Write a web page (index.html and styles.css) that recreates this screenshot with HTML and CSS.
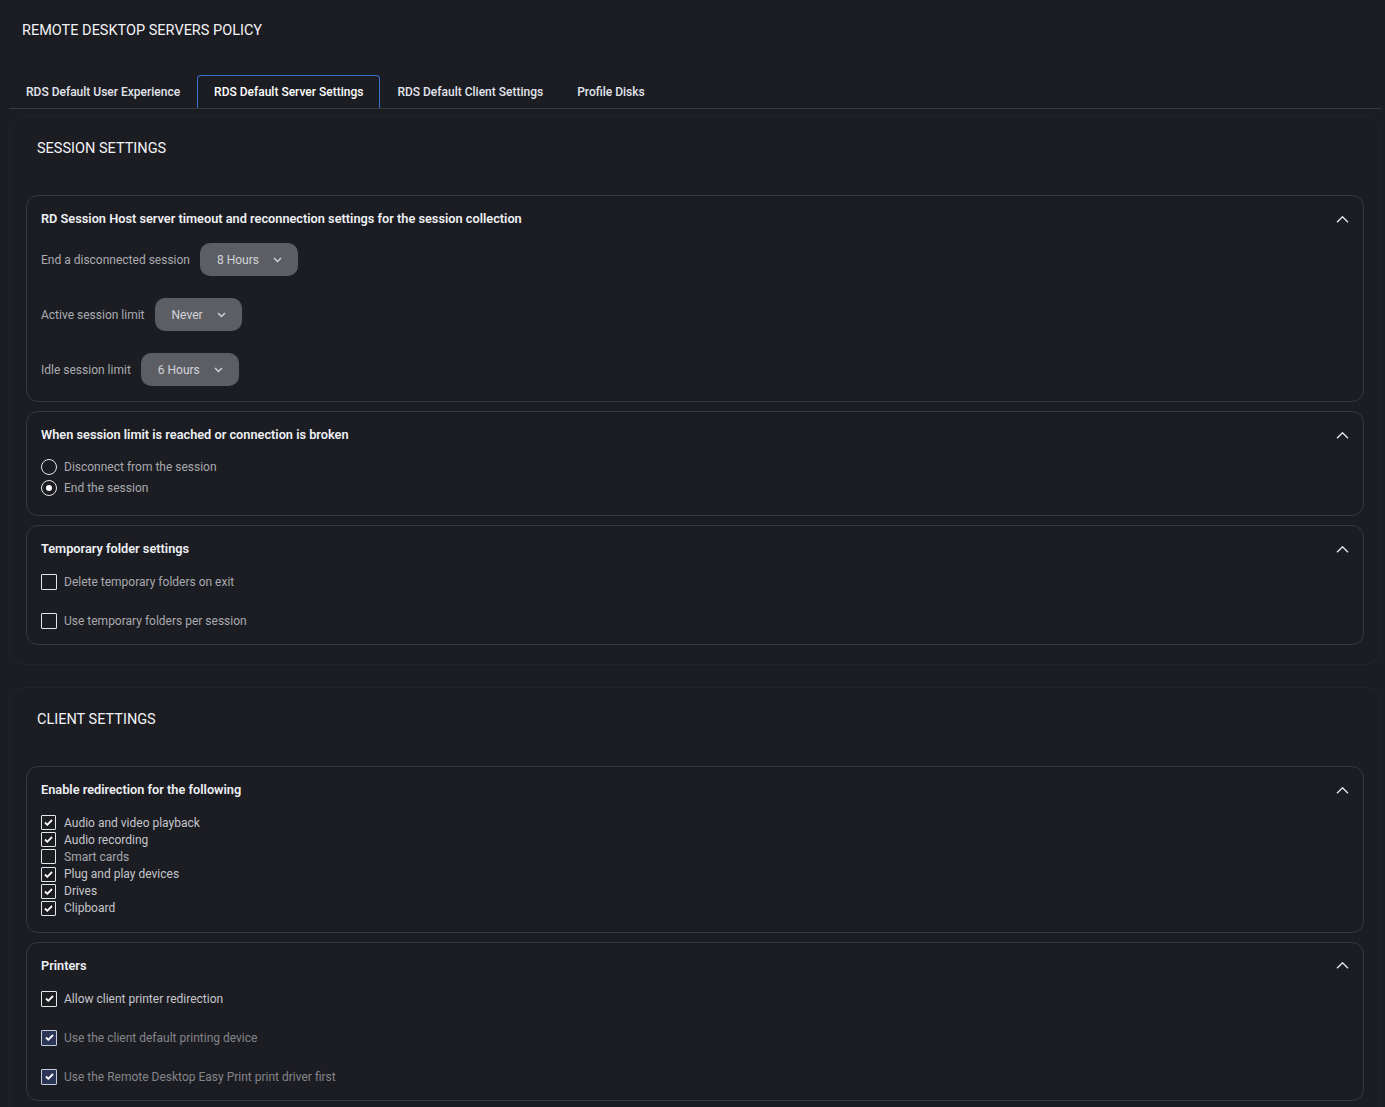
FILE: index.html
```html
<!DOCTYPE html>
<html>
<head>
  <meta charset="utf-8">
  <meta name="viewport" content="width=device-width, initial-scale=1">
  <title>Remote Desktop Servers Policy</title>
  <link rel="stylesheet" href="styles.css">
</head>
<body>
  <div class="page">
    <h1 class="page-title">REMOTE DESKTOP SERVERS POLICY</h1>

    <nav class="tabs">
      <a class="tab">RDS Default User Experience</a>
      <a class="tab active">RDS Default Server Settings</a>
      <a class="tab">RDS Default Client Settings</a>
      <a class="tab">Profile Disks</a>
    </nav>

    <!-- session settings -->
    <section class="panel">
      <h2 class="panel-title">SESSION SETTINGS</h2>

      <div class="card">
        <div class="card-head">
          <h3>RD Session Host server timeout and reconnection settings for the session collection</h3>
          <svg class="chev" width="13" height="7" viewBox="0 0 13 7"><path d="M1 6.3l5.5-5.5 5.5 5.5" fill="none" stroke="#e6e8ee" stroke-width="1.4"/></svg>
        </div>
        <div class="field-list">
          <div class="field">
            <span class="label">End a disconnected session</span>
            <div class="select">8 Hours <svg width="9" height="6" viewBox="0 0 9 6"><path d="M1 1l3.5 3.5L8 1" fill="none" stroke="#d0d2d8" stroke-width="1.5"/></svg></div>
          </div>
          <div class="field">
            <span class="label">Active session limit</span>
            <div class="select">Never <svg width="9" height="6" viewBox="0 0 9 6"><path d="M1 1l3.5 3.5L8 1" fill="none" stroke="#d0d2d8" stroke-width="1.5"/></svg></div>
          </div>
          <div class="field">
            <span class="label">Idle session limit</span>
            <div class="select">6 Hours <svg width="9" height="6" viewBox="0 0 9 6"><path d="M1 1l3.5 3.5L8 1" fill="none" stroke="#d0d2d8" stroke-width="1.5"/></svg></div>
          </div>
        </div>
      </div>

      <div class="card">
        <div class="card-head">
          <h3>When session limit is reached or connection is broken</h3>
          <svg class="chev" width="13" height="7" viewBox="0 0 13 7"><path d="M1 6.3l5.5-5.5 5.5 5.5" fill="none" stroke="#e6e8ee" stroke-width="1.4"/></svg>
        </div>
        <div class="radio-list">
          <label class="opt"><span class="radio"></span>Disconnect from the session</label>
          <label class="opt"><span class="radio on"></span>End the session</label>
        </div>
      </div>

      <div class="card">
        <div class="card-head">
          <h3>Temporary folder settings</h3>
          <svg class="chev" width="13" height="7" viewBox="0 0 13 7"><path d="M1 6.3l5.5-5.5 5.5 5.5" fill="none" stroke="#e6e8ee" stroke-width="1.4"/></svg>
        </div>
        <div class="check-list spaced">
          <label class="opt"><span class="box"></span>Delete temporary folders on exit</label>
          <label class="opt"><span class="box"></span>Use temporary folders per session</label>
        </div>
      </div>
    </section>

    <!-- client settings -->
    <section class="panel">
      <h2 class="panel-title">CLIENT SETTINGS</h2>

      <div class="card">
        <div class="card-head">
          <h3>Enable redirection for the following</h3>
          <svg class="chev" width="13" height="7" viewBox="0 0 13 7"><path d="M1 6.3l5.5-5.5 5.5 5.5" fill="none" stroke="#e6e8ee" stroke-width="1.4"/></svg>
        </div>
        <div class="check-list tight">
          <label class="opt lit"><span class="box on"><svg width="9" height="7" viewBox="0 0 9 7"><path d="M1 3.5l2.3 2.3L8 1" fill="none" stroke="#fff" stroke-width="1.8"/></svg></span>Audio and video playback</label>
          <label class="opt lit"><span class="box on"><svg width="9" height="7" viewBox="0 0 9 7"><path d="M1 3.5l2.3 2.3L8 1" fill="none" stroke="#fff" stroke-width="1.8"/></svg></span>Audio recording</label>
          <label class="opt"><span class="box"></span>Smart cards</label>
          <label class="opt lit"><span class="box on"><svg width="9" height="7" viewBox="0 0 9 7"><path d="M1 3.5l2.3 2.3L8 1" fill="none" stroke="#fff" stroke-width="1.8"/></svg></span>Plug and play devices</label>
          <label class="opt lit"><span class="box on"><svg width="9" height="7" viewBox="0 0 9 7"><path d="M1 3.5l2.3 2.3L8 1" fill="none" stroke="#fff" stroke-width="1.8"/></svg></span>Drives</label>
          <label class="opt lit"><span class="box on"><svg width="9" height="7" viewBox="0 0 9 7"><path d="M1 3.5l2.3 2.3L8 1" fill="none" stroke="#fff" stroke-width="1.8"/></svg></span>Clipboard</label>
        </div>
      </div>

      <div class="card">
        <div class="card-head">
          <h3>Printers</h3>
          <svg class="chev" width="13" height="7" viewBox="0 0 13 7"><path d="M1 6.3l5.5-5.5 5.5 5.5" fill="none" stroke="#e6e8ee" stroke-width="1.4"/></svg>
        </div>
        <div class="check-list spaced">
          <label class="opt lit"><span class="box on"><svg width="9" height="7" viewBox="0 0 9 7"><path d="M1 3.5l2.3 2.3L8 1" fill="none" stroke="#fff" stroke-width="1.8"/></svg></span>Allow client printer redirection</label>
          <label class="opt dim"><span class="box on off"><svg width="9" height="7" viewBox="0 0 9 7"><path d="M1 3.5l2.3 2.3L8 1" fill="none" stroke="#fff" stroke-width="1.8"/></svg></span>Use the client default printing device</label>
          <label class="opt dim"><span class="box on off"><svg width="9" height="7" viewBox="0 0 9 7"><path d="M1 3.5l2.3 2.3L8 1" fill="none" stroke="#fff" stroke-width="1.8"/></svg></span>Use the Remote Desktop Easy Print print driver first</label>
        </div>
      </div>
    </section>
  </div>
</body>
</html>
```

FILE: styles.css
```css
body {
  background: #1c1d22;
  margin: 0;
  padding: 0;
  font-family: Roboto, "Liberation Sans", Arial, sans-serif;
  color: #a7a9af;
  font-size: 12px;
}

.page {
  padding: 0 4px 6px 9px;
}

.page-title {
  margin: 0;
  padding: 22px 0 0 13px;
  height: 55px;
  box-sizing: border-box;
  font-size: 14.5px;
  font-weight: 400;
  color: #f2f3f6;
  line-height: 18px;
}

/* tab strip */
.tabs {
  display: flex;
  margin-top: 20px;
  border-bottom: 1px solid #3a3b41;
}

.tab {
  padding: 0 16px;
  height: 32px;
  line-height: 32px;
  font-size: 12px;
  font-weight: 500;
  color: #e2e5ee;
  border: 1px solid transparent;
  border-bottom: none;
  border-radius: 4px 4px 0 0;
  cursor: pointer;
}

.tab.active {
  border-color: #3c6fd0;
  color: #fff;
}

/* outer section */
.panel {
  margin-top: 7px;
  border: 1px solid #23242a;
  border-radius: 16px;
  padding: 22px 16px 19px 16px;
  background: #1c1d22;
}

.panel + .panel {
  margin-top: 22px;
}

.panel-title {
  margin: 0 0 36px 11px;
  font-size: 14.5px;
  font-weight: 400;
  line-height: 20px;
  color: #f2f3f6;
}

/* collapsible cards */
.card {
  border: 1px solid #393a40;
  border-radius: 12px;
  padding: 15px 14px 15px 14px;
}

.card + .card {
  margin-top: 9px;
}

.card-head {
  display: flex;
  align-items: center;
  justify-content: space-between;
  height: 16px;
}

.card-head h3 {
  margin: 0;
  font-size: 12.75px;
  font-weight: 600;
  color: #eef0f5;
  line-height: 16px;
}

.field-list {
  display: flex;
  flex-direction: column;
  gap: 22px;
  margin-top: 16px;
}

.field {
  display: flex;
  align-items: center;
  gap: 10px;
}

.label {
  color: #a9abb1;
}

.select {
  display: flex;
  align-items: center;
  gap: 14px;
  height: 33px;
  padding: 0 16px 0 17px;
  border-radius: 10px;
  background: #5c5e64;
  color: #d2d4da;
  font-size: 12px;
}

/* radios and checkboxes */
.radio-list {
  display: flex;
  flex-direction: column;
  gap: 5px;
  margin-top: 16px;
  padding-bottom: 4px;
}

.check-list {
  display: flex;
  flex-direction: column;
}

.check-list.spaced {
  gap: 23px;
  margin-top: 17px;
}

.check-list.tight {
  gap: 2.2px;
  margin-top: 17px;
  padding-bottom: 1px;
}

.opt {
  display: flex;
  align-items: center;
  gap: 7px;
  height: 16px;
  color: #a7a9af;
}

.check-list.tight .opt {
  height: 15px;
  gap: 8px;
}

.opt.lit {
  color: #c4c6cc;
}

.opt.dim {
  color: #83858b;
}

.radio {
  width: 14px;
  height: 14px;
  border: 1px solid #e4e6ea;
  border-radius: 50%;
  position: relative;
}

.radio.on::after {
  content: "";
  position: absolute;
  left: 4px;
  top: 4px;
  width: 6px;
  height: 6px;
  border-radius: 50%;
  background: #fff;
}

.box {
  width: 14px;
  height: 14px;
  border: 1px solid #e4e6ea;
  border-radius: 1px;
  display: flex;
  align-items: center;
  justify-content: center;
  flex: none;
}

.check-list.tight .box {
  width: 13px;
  height: 13px;
}

.box.off {
  background: #2b3656;
  border-color: #c6cde0;
}
```
